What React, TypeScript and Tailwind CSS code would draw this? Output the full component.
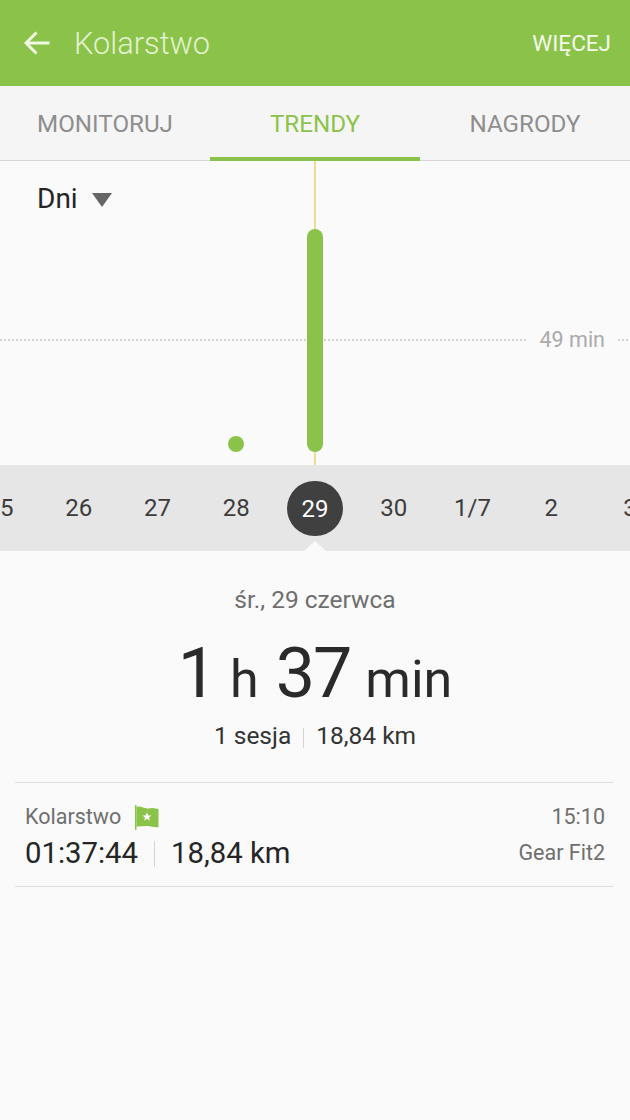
import React from "react";

const days = ["25", "26", "27", "28", "29", "30", "1/7", "2", "3"];

export default function App() {
  return (
    <div className="w-[630px] h-[1120px] overflow-hidden bg-[#fafafa] flex flex-col font-['Roboto',sans-serif]">
      <header className="h-[86px] shrink-0 bg-[#8bc34a] flex items-center pl-[24px] pr-[19px]">
        <svg width="26" height="24" viewBox="0 0 26 24" fill="none" stroke="#f1f8e4" strokeWidth="3" className="shrink-0">
          <path d="M25.5 12H2.5M12.5 1.5L2 12l10.500 10.500" />
        </svg>
        <span className="ml-[24px] mt-[3px] text-[30.800px] font-light text-[#e3f2cf]">Kolarstwo</span>
        <span className="ml-auto mt-[2px] text-[22.500px] text-[#f4f9ea]">WIĘCEJ</span>
      </header>
      <nav className="h-[75px] shrink-0 bg-[#f5f5f5] grid grid-cols-3 border-b border-[#d6d6d6] text-[24.200px]">
        <div className="flex items-center justify-center pt-[2px] text-[#8e8e8e]">MONITORUJ</div>
        <div className="flex items-center justify-center pt-[5px] border-b-[4px] border-[#8bc34a] text-[#8bc34a] -mb-px">TRENDY</div>
        <div className="flex items-center justify-center pt-[2px] text-[#8e8e8e]">NAGRODY</div>
      </nav>
      <section className="relative h-[304px] shrink-0">
        <div className="absolute left-[37px] top-[21px] flex items-center gap-[14px]">
          <span className="text-[28px] leading-[34px] text-[#252525]">Dni</span>
          <svg width="20" height="14" viewBox="0 0 20 14" className="mt-[1px]"><path d="M0 0h20L10 14z" fill="#666666" /></svg>
        </div>
        <div className="absolute left-[314px] top-0 bottom-0 w-[2px] bg-[#f0dc96]" />
        <div className="absolute left-0 w-[526px] top-[178px] h-[2px] bg-[repeating-linear-gradient(90deg,#d2d2d2_0_2px,transparent_2px_4px)]" />
        <div className="absolute right-0 w-[12px] top-[178px] h-[2px] bg-[repeating-linear-gradient(90deg,#d2d2d2_0_2px,transparent_2px_4px)]" />
        <span className="absolute right-[25px] top-[166px] text-[21.500px] leading-[26px] text-[#ababab]">49 min</span>
        <div className="absolute left-[307px] top-[68px] w-[16px] h-[223px] rounded-full bg-[#8bc34a]" />
        <div className="absolute left-[228px] top-[275px] w-[16px] h-[16px] rounded-full bg-[#8bc34a]" />
      </section>
      <section className="relative h-[86px] shrink-0 bg-[#e6e6e6] overflow-hidden">
        <div className="grid grid-cols-9 w-[709px] -ml-[39.500px] h-full items-center">
          {days.map((d) =>
            d === "29" ? (
              <div key={d} className="flex justify-center">
                <span className="w-[56px] h-[55px] mt-[1px] rounded-full bg-[#404040] text-white text-[24px] flex items-center justify-center">{d}</span>
              </div>
            ) : (
              <div key={d} className="text-center text-[24px] text-[#3c3c3c]">{d}</div>
            )
          )}
        </div>
        <div className="absolute left-[304px] bottom-0 w-0 h-0 border-x-[11px] border-x-transparent border-b-[10px] border-b-[#fafafa]" />
      </section>
      <section className="flex flex-col items-center">
        <div className="mt-[34px] text-[24.500px] leading-[30px] text-[#6f6f6f]">śr., 29 czerwca</div>
        <div className="mt-[22px] h-[72px] flex items-baseline text-[#2a2a2a] leading-[72px]">
          <span className="text-[70px] font-normal tracking-[-2px]">1</span>
          <span className="text-[52px] ml-[15px]">h</span>
          <span className="text-[70px] ml-[17px] font-normal tracking-[-2px]">37</span>
          <span className="text-[52px] ml-[15px]">min</span>
        </div>
        <div className="mt-[12px] flex items-center text-[24.500px] leading-[30px] text-[#333333]">
          <span>1 sesja</span>
          <span className="mx-[12px] mt-[4px] w-px h-[20px] bg-[#d4d4d4]" />
          <span>18,84 km</span>
        </div>
      </section>
      <section className="ml-[15px] mr-[16px] mt-[31px] h-[105px] border-y border-[#dedede] pl-[10px] pr-[9px] flex justify-between">
        <div className="pt-[20px]">
          <div className="flex items-center h-[28px]">
            <span className="text-[21.500px] text-[#6f6f6f]">Kolarstwo</span>
            <svg width="24" height="25" viewBox="0 0 24 25" className="ml-[14px]">
              <path d="M0 0h1.500v25H0z" fill="#8bc34a" />
              <path d="M1.500 2c4-1.500 7 1.500 11 1.500l5-.5L23.500 4v18c-4 1-7-1-11-1l-11 .5z" fill="#8bc34a" />
              <path d="M12 7.500l1.300 3h3.200l-2.600 2 1 3.200-2.900-1.900-2.900 1.900 1-3.200-2.600-2h3.200z" fill="#ffffff" />
            </svg>
          </div>
          <div className="flex items-center mt-[4px] text-[29.300px] leading-[36px] text-[#252525]">
            <span>01:37:44</span>
            <span className="mx-[16px] mt-[2px] w-px h-[26px] bg-[#d4d4d4]" />
            <span>18,84 km</span>
          </div>
        </div>
        <div className="pt-[20px] flex flex-col items-end text-[21.500px] text-[#6f6f6f]">
          <div className="h-[28px] flex items-center">15:10</div>
          <div className="mt-[8px] leading-[28px]">Gear Fit2</div>
        </div>
      </section>
    </div>
  );
}
